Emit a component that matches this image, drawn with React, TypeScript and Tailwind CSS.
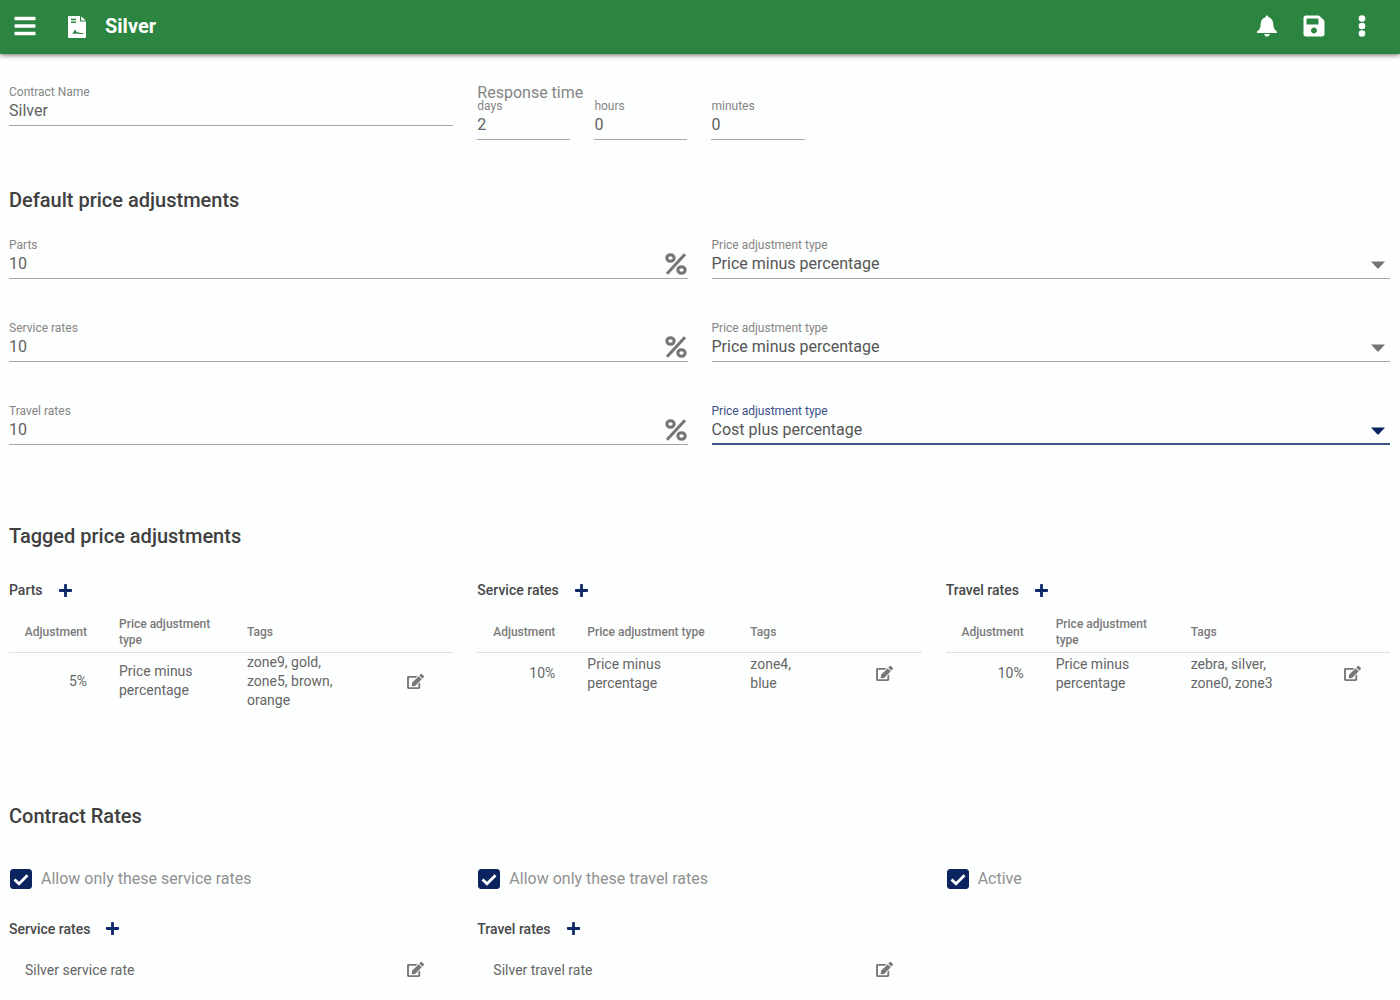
import React, { useId } from "react";
import { FaBars, FaEdit, FaPlus, FaSave } from "react-icons/fa";

function ContractIcon() {
  return (
    <svg viewBox="0 0 18 22" className="h-[22px] w-[18px]" aria-hidden="true">
      <path
        fill="currentColor"
        fillRule="evenodd"
        d="M1 0h11v5.500h6V21a1 1 0 0 1-1 1H1a1 1 0 0 1-1-1V1a1 1 0 0 1 1-1zM3 2.800v1.400h5V2.800zM3 5.600v1.400h5V5.600zM2.800 17.800c1.600 0 2-.5 2.700-1.800l1-1.700c.3-.5.9-.5 1.200.1l.9 1.700c.7-.4 1.500-.2 2.200.4.4.3.8.4 1.500.4h3v1.200h-3.600c-1 0-1.500-.2-2.100-.6-.5-.3-.9-.2-1.600.3-.5.300-.9.2-1.200-.3-.8 0-1.400.3-2.200.3z"
      />
      <path fill="currentColor" d="M13.200 0.300L17.800 4.600H13.200z" />
    </svg>
  );
}

function BellIcon() {
  return (
    <svg viewBox="0 0 22 22" className="size-[22px]" fill="currentColor" aria-hidden="true">
      <path d="M11 .4c.8 0 1.300.6 1.300 1.300v.6c2.900.6 4.700 2.900 4.900 5.900.2 3.400.7 5.600 2.300 7 .9.8 1.700 1.300 1.700 2.100 0 .5-.4.8-.9.8H1.700c-.5 0-.9-.3-.9-.8 0-.8.8-1.300 1.700-2.100 1.600-1.400 2.100-3.600 2.300-7 .2-3 2-5.300 4.900-5.900v-.6C9.700 1 10.200.4 11 .4z" />
      <path d="M8.200 19h5.600c-.2 1.500-1.300 2.600-2.800 2.600S8.400 20.500 8.200 19z" />
    </svg>
  );
}

function DotsIcon() {
  return (
    <svg viewBox="0 0 8 22" className="h-[22px] w-2" fill="currentColor" aria-hidden="true">
      <circle cx="4" cy="3.500" r="3.300" />
      <circle cx="4" cy="11" r="3.300" />
      <circle cx="4" cy="18.500" r="3.300" />
    </svg>
  );
}

function PercentIcon() {
  return (
    <svg viewBox="0 0 22 22" className="h-[22px] w-[22px] text-[#757575]" fill="none" stroke="currentColor" strokeWidth="3" aria-hidden="true">
      <ellipse cx="5.500" cy="5" rx="3.700" ry="3.200" />
      <ellipse cx="16.500" cy="17" rx="3.700" ry="3.200" />
      <path d="M20 1.200L2 20.800" />
    </svg>
  );
}

const labelClass = "block text-xs leading-4 text-[#858585]";

function TextField({ label, value, percent = false }: { label: string; value: string; percent?: boolean }) {
  const id = useId();
  return (
    <div className="flex items-end border-b border-[#a6a6a6]">
      <div className="min-w-0 flex-1 pb-[3px]">
        <label htmlFor={id} className={labelClass}>{label}</label>
        <input id={id} defaultValue={value} className="block h-[22px] w-full bg-transparent text-base leading-[22px] text-[#626262] outline-none" />
      </div>
      {percent && (
        <span className="pb-[3px] pr-px">
          <PercentIcon />
        </span>
      )}
    </div>
  );
}

function SelectField({ value, active = false }: { value: string; active?: boolean }) {
  const id = useId();
  return (
    <div className={active ? "relative border-b-2 border-[#3c5187] pb-0.5" : "relative border-b border-[#a6a6a6] pb-[3px]"}>
      <label htmlFor={id} className={active ? "block text-xs leading-4 text-[#3c5187]" : labelClass}>
        Price adjustment type
      </label>
      <select id={id} defaultValue={value} className="block h-[22px] w-full appearance-none bg-transparent text-base leading-[22px] text-[#555] outline-none">
        <option>Price minus percentage</option>
        <option>Cost plus percentage</option>
      </select>
      <svg
        viewBox="0 0 14 8"
        className={active ? "pointer-events-none absolute right-[5px] bottom-2 h-2 w-[14px] text-[#0b2460]" : "pointer-events-none absolute right-[5px] bottom-[9px] h-2 w-[14px] text-[#757575]"}
        aria-hidden="true"
      >
        <path d="M0 .5h14L8 7a1.400 1.400 0 0 1-2 0z" fill="currentColor" />
      </svg>
    </div>
  );
}

function SectionTitle({ children }: { children: React.ReactNode }) {
  return <h2 className="text-xl leading-6 font-medium text-[#404040]">{children}</h2>;
}

function SubHeading({ title }: { title: string }) {
  return (
    <div className="flex h-5 items-center gap-[15px]">
      <h3 className="text-sm leading-5 font-medium text-[#484848]">{title}</h3>
      <button type="button" aria-label={`Add ${title}`} className="text-[#0f2968]">
        <FaPlus className="size-[15px]" />
      </button>
    </div>
  );
}

function EditButton({ label }: { label: string }) {
  return (
    <button type="button" aria-label={label} className="block text-[#777]">
      <FaEdit className="h-[15px] w-[17px]" />
    </button>
  );
}

interface TagTableProps {
  title: string;
  adjustment: string;
  tags: string;
  typeWidth: string;
  tagsWidth: string;
}

function TagTable({ title, adjustment, tags, typeWidth, tagsWidth }: TagTableProps) {
  return (
    <section>
      <SubHeading title={title} />
      <table className="mt-2.5 w-full table-fixed text-left">
        <thead>
          <tr className="h-[42px] border-b border-[#e0e0e0] text-xs leading-4 text-[#7a7a7a]">
            <th scope="col" className="w-[94px] pt-0.5 pr-4 text-right font-medium">Adjustment</th>
            <th scope="col" className={`${typeWidth} pt-0.5 pr-4 pl-4 font-medium`}>Price adjustment type</th>
            <th scope="col" className={`${tagsWidth} pt-0.5 pl-4 font-medium`}>Tags</th>
            <th scope="col" aria-label="Actions" />
          </tr>
        </thead>
        <tbody>
          <tr className="h-[43px] text-sm leading-[19px] text-[#666]">
            <td className="pr-4 text-right">{adjustment}</td>
            <td className="pr-4 pl-4">
              <div className="max-w-24">Price minus percentage</div>
            </td>
            <td className="pl-4">{tags}</td>
            <td>
              <div className="flex justify-end pr-[29px]">
                <EditButton label={`Edit ${title} adjustment`} />
              </div>
            </td>
          </tr>
        </tbody>
      </table>
    </section>
  );
}

function CheckField({ label }: { label: string }) {
  return (
    <label className="flex h-6 items-center gap-[9px] pl-px text-base leading-6 text-[#919191]">
      <span className="grid size-[22px] place-items-center">
        <input type="checkbox" defaultChecked className="peer col-start-1 row-start-1 h-5 w-[22px] appearance-none rounded-[3px] border border-[#0b2460] checked:bg-[#0b2460]" />
        <svg viewBox="0 0 22 20" className="pointer-events-none col-start-1 row-start-1 hidden h-5 w-[22px] peer-checked:block" fill="none" stroke="white" strokeWidth="2.800" aria-hidden="true">
          <path d="M4.500 10.500L9 14.700L17.500 6.200" />
        </svg>
      </span>
      {label}
    </label>
  );
}

function RateList({ title, rate }: { title: string; rate: string }) {
  return (
    <section>
      <SubHeading title={title} />
      <ul className="mt-2.5">
        <li className="flex h-[42px] items-center justify-between pr-[29px] pl-4 text-sm text-[#666]">
          {rate}
          <EditButton label={`Edit ${rate}`} />
        </li>
      </ul>
    </section>
  );
}

export default function App() {
  return (
    <div className="min-h-screen bg-[#fdfefe] font-['Roboto',sans-serif]">
      <header className="flex h-[54px] items-center bg-[#2b8540] pr-[34px] pb-0.5 pl-3.5 text-white shadow-[0_1px_5px_rgba(0,0,0,0.6)]">
        <button type="button" aria-label="Menu">
          <FaBars className="h-6 w-[22px]" />
        </button>
        <span className="ml-8 pt-0.5">
          <ContractIcon />
        </span>
        <h1 className="ml-[19px] flex-1 text-xl leading-6 font-bold">Silver</h1>
        <div className="flex items-center">
          <button type="button" aria-label="Notifications">
            <BellIcon />
          </button>
          <button type="button" aria-label="Save" className="ml-6">
            <FaSave className="size-6" />
          </button>
          <button type="button" aria-label="More options" className="ml-8">
            <DotsIcon />
          </button>
        </div>
      </header>

      <main className="pt-[30px] pr-2.5 pb-2 pl-[9px]">
        <div className="grid grid-cols-12 items-start gap-x-6">
          <div className="col-span-4">
            <TextField label="Contract Name" value="Silver" />
          </div>
          <fieldset className="col-span-8">
            <legend className="h-3.5 text-base leading-[18px] text-[#858585]">Response time</legend>
            <div className="grid grid-cols-8 gap-x-6">
              <TextField label="days" value="2" />
              <TextField label="hours" value="0" />
              <TextField label="minutes" value="0" />
            </div>
          </fieldset>
        </div>

        <div className="mt-12">
          <SectionTitle>Default price adjustments</SectionTitle>
          <div className="mt-[25px] grid grid-cols-2 gap-x-6 gap-y-[41px]">
            <TextField label="Parts" value="10" percent />
            <SelectField value="Price minus percentage" />
            <TextField label="Service rates" value="10" percent />
            <SelectField value="Price minus percentage" />
            <TextField label="Travel rates" value="10" percent />
            <SelectField value="Cost plus percentage" active />
          </div>
        </div>

        <div className="mt-[79px]">
          <SectionTitle>Tagged price adjustments</SectionTitle>
          <div className="mt-8 grid grid-cols-3 gap-x-6">
            <TagTable title="Parts" adjustment="5%" tags="zone9, gold, zone5, brown, orange" typeWidth="w-32" tagsWidth="w-[112px]" />
            <TagTable title="Service rates" adjustment="10%" tags="zone4, blue" typeWidth="w-[163px]" tagsWidth="w-[80px]" />
            <TagTable title="Travel rates" adjustment="10%" tags="zebra, silver, zone0, zone3" typeWidth="w-[135px]" tagsWidth="w-[112px]" />
          </div>
        </div>

        <div className="mt-[94px]">
          <SectionTitle>Contract Rates</SectionTitle>
          <div className="mt-[39px] grid grid-cols-3 gap-x-6 gap-y-7">
            <CheckField label="Allow only these service rates" />
            <CheckField label="Allow only these travel rates" />
            <CheckField label="Active" />
            <RateList title="Service rates" rate="Silver service rate" />
            <RateList title="Travel rates" rate="Silver travel rate" />
          </div>
        </div>
      </main>
    </div>
  );
}
